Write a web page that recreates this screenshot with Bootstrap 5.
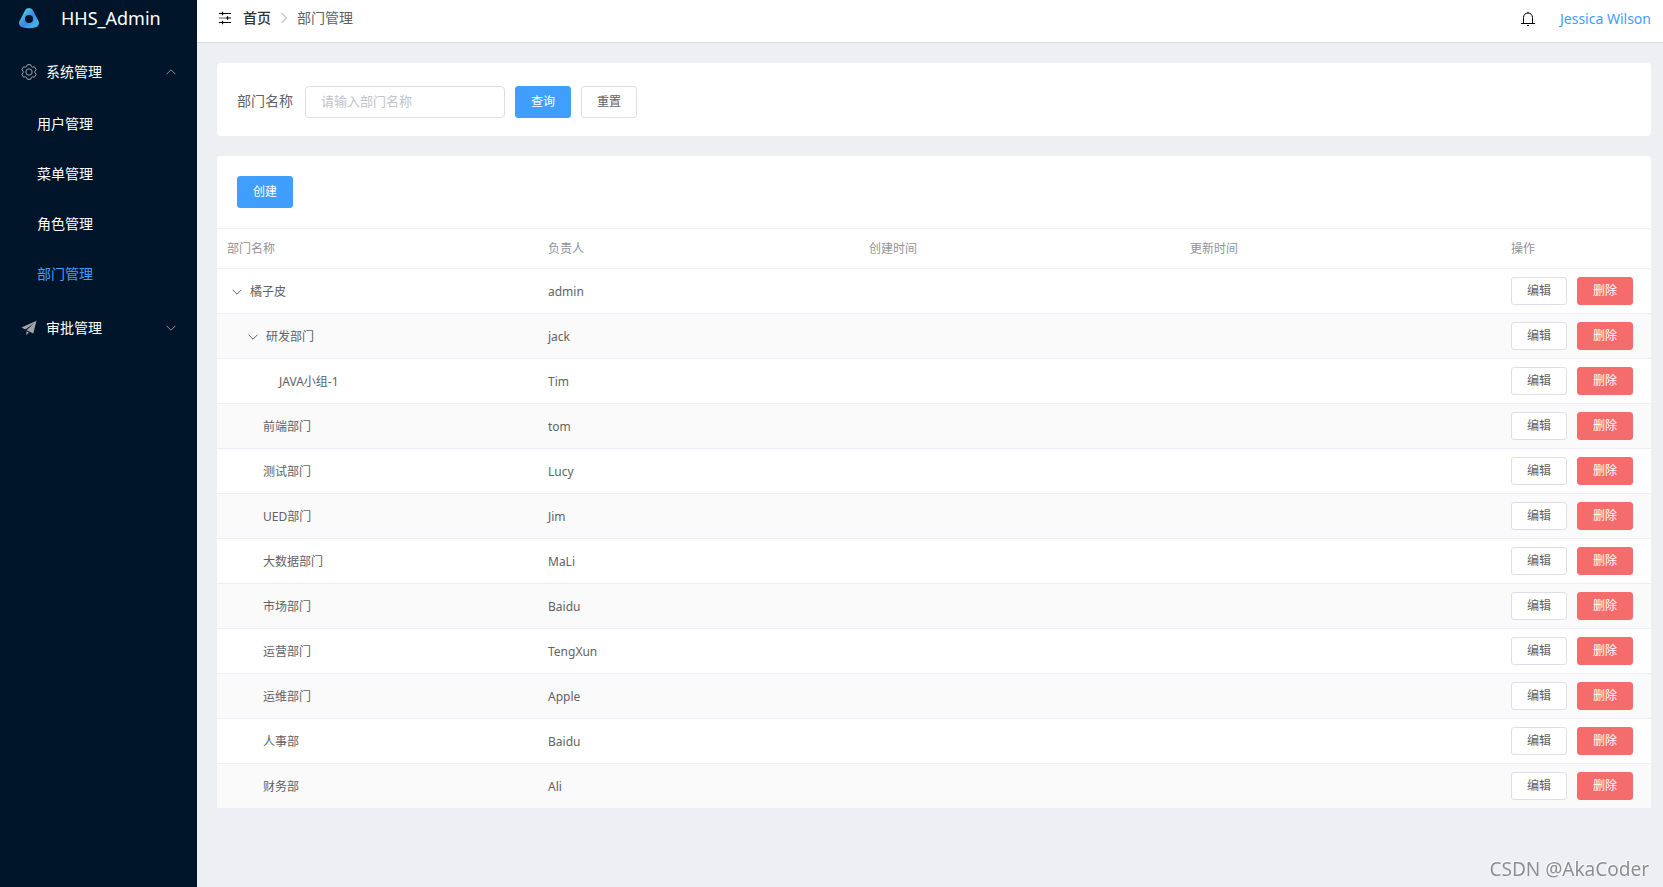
<!DOCTYPE html>
<html lang="zh-CN">
<head>
<meta charset="utf-8">
<meta name="viewport" content="width=device-width, initial-scale=1">
<title>HHS_Admin</title>
<link href="https://cdn.jsdelivr.net/npm/bootstrap@5.3.0/dist/css/bootstrap.min.css" rel="stylesheet">
<style>
  body { font-family: "Noto Sans", "Noto Sans CJK SC", sans-serif; font-size: 14px; line-height: 20px; color: #606266; background: #eeeff3; }
  a { text-decoration: none; }
  svg { display: block; flex: none; }
  .sidebar { width: 197px; background: #001529; color: #fff; }
  .brand { height: 44px; padding: 0 16px 8px 18px; gap: 21px; font-size: 18px; color: #fff; }
  .menu-title { height: 56px; width: 100%; padding: 0 21px; gap: 9px; border: 0; background: none; color: #fff; }
  .menu-link { height: 50px; padding: 0 37px 2px; color: #fff; }
  .menu-link.active { color: #409eff; }
  .topbar { height: 43px; padding: 0 12px 6px 20px; background: #fff; border-bottom: 1px solid #d8dce5; }
  .crumbs { gap: 9px; }
  .crumbs a { color: #303133; font-weight: 500; }
  .account { gap: 16px; padding-top: 2px; }
  .user { color: #409eff; }
  .content { padding: 20px 12px 20px 20px; gap: 20px; }
  .panel { background: #fff; border-radius: 4px; }
  .search { padding: 23px 20px 18px; gap: 10px; }
  .search label { padding-bottom: 2px; }
  .search .form-control { width: 200px; height: 32px; padding: 0 15px 2px; margin-left: 2px; font-size: 13px; border-color: #dcdfe6; border-radius: 4px; }
  .form-control::placeholder { color: #c0c4cc; }
  .btn { --bs-btn-font-size: 12px; --bs-btn-border-radius: 3px; width: 56px; height: 32px; padding: 0; line-height: 12px; }
  .btn-primary { --bs-btn-bg: #409eff; --bs-btn-border-color: #409eff; }
  .btn-plain { --bs-btn-bg: #fff; --bs-btn-color: #606266; --bs-btn-border-color: #dcdfe6; }
  .btn-danger { --bs-btn-bg: #f56c6c; --bs-btn-border-color: #f56c6c; }
  .tools { padding: 20px; border-bottom: 1px solid #ebeef5; }
  .dept { --bs-table-color: #606266; table-layout: fixed; font-size: 12px; margin: 0; border-color: #ebeef5; }
  .dept > :not(caption) > * > * { padding: 10px 10px 8px; vertical-align: middle; color: #606266; }
  .dept > tbody > tr > td:last-child { padding-block: 8px; }
  .dept > thead > tr > th { height: 39px; color: #909399; font-weight: 400; }
  .dept > tbody > tr:nth-child(even) > td { background: #fafafa; }
  .dept tbody .btn { height: 28px; }
  .dept td:first-child svg { margin-right: 3px; }
  .dept .leaf { padding-left: 20px; }
  .lv1 { margin-left: 16px; }
  .lv2 { margin-left: 32px; }
  .ops-col { width: 150px; }
  .ops { gap: 10px; }
  .watermark { position: fixed; right: 14px; bottom: 5px; font-size: 19px; line-height: 26px; color: #8d8e92; text-shadow: -1px -1px 0 #fff; }
</style>
</head>
<body>
<svg class="d-none">
  <symbol id="down" viewBox="0 0 10 6"><path d="M.6.8 5 5.200 9.400.8" fill="none" stroke="currentColor"/></symbol>
  <symbol id="up" viewBox="0 0 10 6"><path d="M.6 5.200 5 .8 9.400 5.200" fill="none" stroke="currentColor"/></symbol>
</svg>
<div class="d-flex min-vh-100">
  <aside class="sidebar flex-shrink-0">
    <a href="#" class="brand d-flex align-items-center">
      <svg width="22" height="22" viewBox="0 0 22 22">
        <defs><linearGradient id="lg" x1="0" y1="0" x2="1" y2="1"><stop offset="0" stop-color="#4fc3e0"/><stop offset=".55" stop-color="#3a86e6"/><stop offset="1" stop-color="#42aee8"/></linearGradient></defs>
        <path d="M11 5.500 16.500 16Q11 17.500 5.500 16Z" fill="none" stroke="url(#lg)" stroke-width="9" stroke-linejoin="round"/>
        <circle cx="11" cy="12" r="4" fill="#001529"/>
      </svg>
      <span>HHS_Admin</span>
    </a>
    <nav>
      <button type="button" class="menu-title d-flex align-items-center">
        <svg width="16" height="16" viewBox="0 0 16 16" fill="none" stroke="#a0a3a8"><circle cx="8" cy="8" r="3.200"/><path d="M6.300.7H9.700L10.300 2.500 11.600 3.200 13.400 2.800 15.200 5.800 13.900 7.200V8.800L15.200 10.200 13.400 13.200 11.600 12.800 10.300 13.500 9.700 15.300H6.300L5.700 13.500 4.400 12.800 2.600 13.200.8 10.200 2.100 8.800V7.200L.8 5.800 2.600 2.800 4.400 3.200 5.700 2.500Z" stroke-linejoin="round"/></svg>
        <span class="flex-grow-1 text-start">系统管理</span>
        <svg width="10" height="6" color="#909399"><use href="#up"/></svg>
      </button>
      <a href="#" class="menu-link d-flex align-items-center">用户管理</a>
      <a href="#" class="menu-link d-flex align-items-center">菜单管理</a>
      <a href="#" class="menu-link d-flex align-items-center">角色管理</a>
      <a href="#" class="menu-link active d-flex align-items-center">部门管理</a>
      <button type="button" class="menu-title d-flex align-items-center">
        <svg width="16" height="16" viewBox="0 0 16 16" fill="#a0a3a8"><path d="M15.500.8.5 7.600 4.300 9.600 12.600 3.500 5.600 10.300 12.300 13.400ZM5.400 11.300V15.300L7.800 12.400Z"/></svg>
        <span class="flex-grow-1 text-start">审批管理</span>
        <svg width="10" height="6" color="#909399"><use href="#down"/></svg>
      </button>
    </nav>
  </aside>
  <div class="flex-grow-1">
    <header class="topbar d-flex align-items-center justify-content-between">
      <div class="crumbs d-flex align-items-center">
        <svg width="17" height="16" viewBox="0 0 17 16" stroke="#000" stroke-width="1.200"><path d="M2 3.500H14M2 12.500H14M5.500 1.800V5.200M10.500 6.300V9.700M5.500 10.800V14.200M9 8H14"/><path d="M2 8H9" stroke="#777"/></svg>
        <a href="#">首页</a>
        <svg width="8" height="12" viewBox="0 0 8 12" fill="none" stroke="#c0c4cc" stroke-width="1.200"><path d="M1.500 1 6.500 6 1.500 11"/></svg>
        <span>部门管理</span>
      </div>
      <div class="account d-flex align-items-center">
        <svg width="24" height="16" viewBox="-1 0 24 16" fill="none" stroke="#000"><path d="M0 12.500H14M2.500 12.500V6.500A4.500 4.500 0 0 1 11.500 6.500V12.500M7 .8V2.200M6 14.500H8"/></svg>
        <a href="#" class="user">Jessica Wilson</a>
      </div>
    </header>
    <main class="content d-flex flex-column">
      <form class="panel search d-flex align-items-center">
        <label for="dept-name">部门名称</label>
        <input id="dept-name" type="text" class="form-control" placeholder="请输入部门名称">
        <button type="button" class="btn btn-primary">查询</button>
        <button type="button" class="btn btn-plain">重置</button>
      </form>
      <section class="panel">
        <div class="tools"><button type="button" class="btn btn-primary d-block">创建</button></div>
        <table class="table dept">
          <thead><tr><th>部门名称</th><th>负责人</th><th>创建时间</th><th>更新时间</th><th class="ops-col">操作</th></tr></thead>
          <tbody id="rows"></tbody>
        </table>
      </section>
    </main>
  </div>
</div>
<div class="watermark">CSDN @AkaCoder</div>
<script src="https://cdn.jsdelivr.net/npm/bootstrap@5.3.0/dist/js/bootstrap.bundle.min.js"></script>
<script>
  // name, owner, tree level, has children
  const depts = [
    ['橘子皮', 'admin', 0, true], ['研发部门', 'jack', 1, true], ['JAVA小组-1', 'Tim', 2],
    ['前端部门', 'tom', 1], ['测试部门', 'Lucy', 1], ['UED部门', 'Jim', 1], ['大数据部门', 'MaLi', 1],
    ['市场部门', 'Baidu', 1], ['运营部门', 'TengXun', 1], ['运维部门', 'Apple', 1], ['人事部', 'Baidu', 1], ['财务部', 'Ali', 1]
  ];
  document.getElementById('rows').innerHTML = depts.map(([name, owner, level, parent]) => `
    <tr>
      <td><div class="d-flex align-items-center lv${level} ${parent ? '' : 'leaf'}">${parent ? '<svg width="20" height="6" color="#606266"><use href="#down"/></svg>' : ''}${name}</div></td>
      <td>${owner}</td><td></td><td></td>
      <td><div class="ops d-flex"><button type="button" class="btn btn-plain">编辑</button><button type="button" class="btn btn-danger">删除</button></div></td>
    </tr>`).join('');
</script>
</body>
</html>
